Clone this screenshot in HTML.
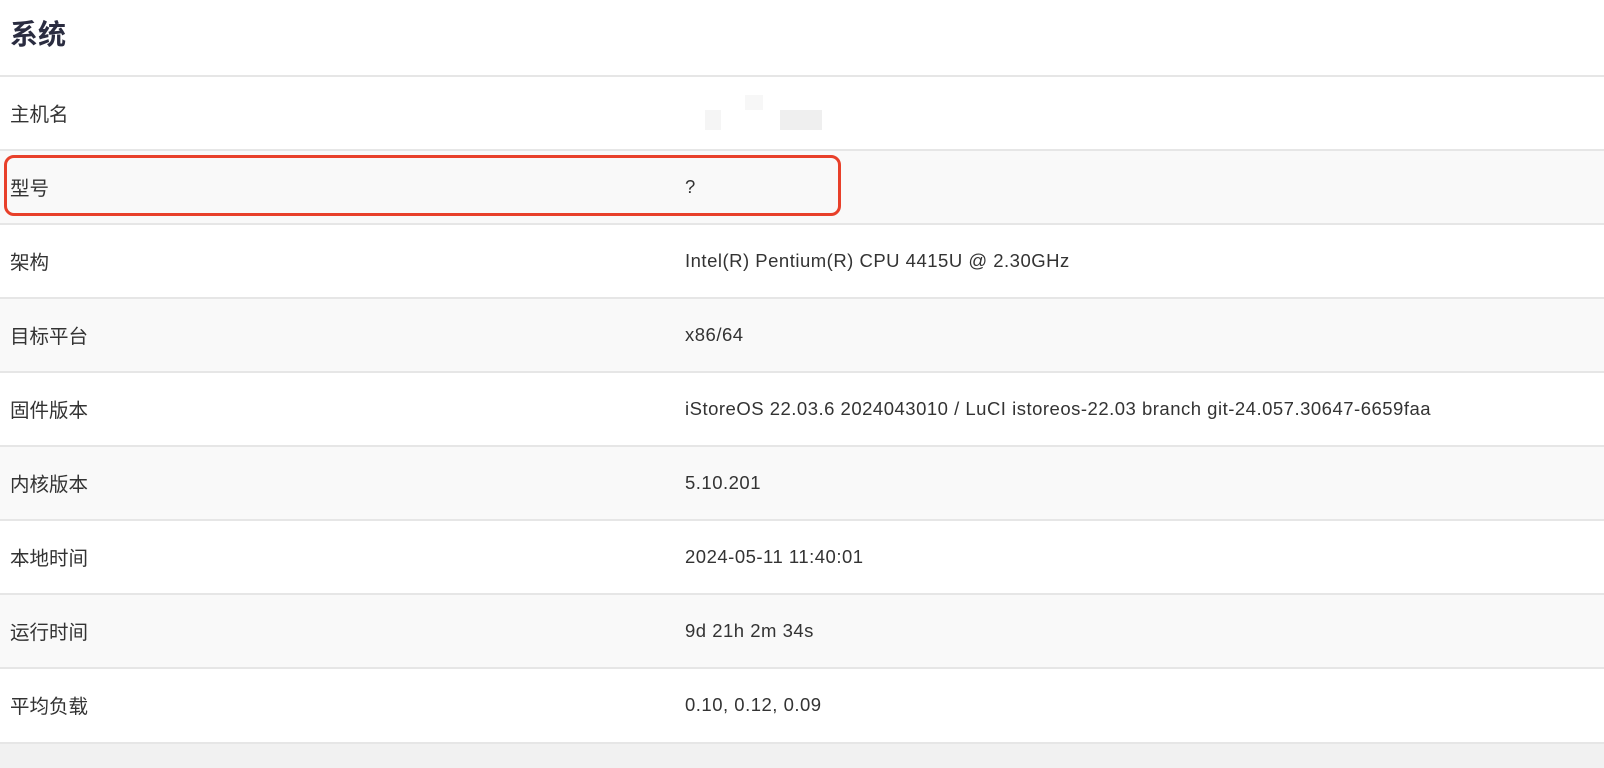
<!DOCTYPE html>
<html><head><meta charset="utf-8"><style>
body{margin:0;width:1604px;height:766px;background:#fff;font-family:"Liberation Sans","Noto Sans CJK SC",sans-serif;position:relative;overflow:hidden;color:#333}
h1{position:absolute;left:10px;top:13px;margin:0;font-size:28px;font-weight:bold;color:#2a2c40;font-family:"Noto Sans CJK SC",sans-serif}
.row{position:absolute;left:0;width:1604px;height:72px;border-top:2px solid #e6e6e6;font-size:18.5px}
.row span{position:absolute;top:25px;line-height:22px}
.l{left:10px;font-family:"Noto Sans CJK SC",sans-serif;font-size:19.5px}
.v{left:685px;letter-spacing:0.5px}
.g{background:#f9f9f9}
.box{position:absolute;left:4px;top:155px;width:831px;height:55px;border:3px solid #e8402a;border-radius:10px}
.bot{position:absolute;left:0;top:742px;width:1604px;height:24px;background:#f1f1f1;border-top:2px solid #e6e6e6}
.blur{position:absolute;background:#f3f3f3}
</style></head><body>
<h1>系统</h1>
<div class="row" style="top:75px"><span class="l">主机名</span></div>
<div class="blur" style="left:705px;top:110px;width:16px;height:20px;background:#f5f5f5"></div>
<div class="blur" style="left:780px;top:110px;width:42px;height:20px;background:#efefef"></div>
<div class="blur" style="left:745px;top:95px;width:18px;height:15px;background:#f7f7f7"></div>
<div class="row g" style="top:149px"><span class="l">型号</span><span class="v">?</span></div>
<div class="row" style="top:223px"><span class="l">架构</span><span class="v">Intel(R) Pentium(R) CPU 4415U @ 2.30GHz</span></div>
<div class="row g" style="top:297px"><span class="l">目标平台</span><span class="v">x86/64</span></div>
<div class="row" style="top:371px"><span class="l">固件版本</span><span class="v">iStoreOS 22.03.6 2024043010 / LuCI istoreos-22.03 branch git-24.057.30647-6659faa</span></div>
<div class="row g" style="top:445px"><span class="l">内核版本</span><span class="v">5.10.201</span></div>
<div class="row" style="top:519px"><span class="l">本地时间</span><span class="v">2024-05-11 11:40:01</span></div>
<div class="row g" style="top:593px"><span class="l">运行时间</span><span class="v">9d 21h 2m 34s</span></div>
<div class="row" style="top:667px"><span class="l">平均负载</span><span class="v">0.10, 0.12, 0.09</span></div>
<div class="bot"></div>
<div class="box"></div>
</body></html>
